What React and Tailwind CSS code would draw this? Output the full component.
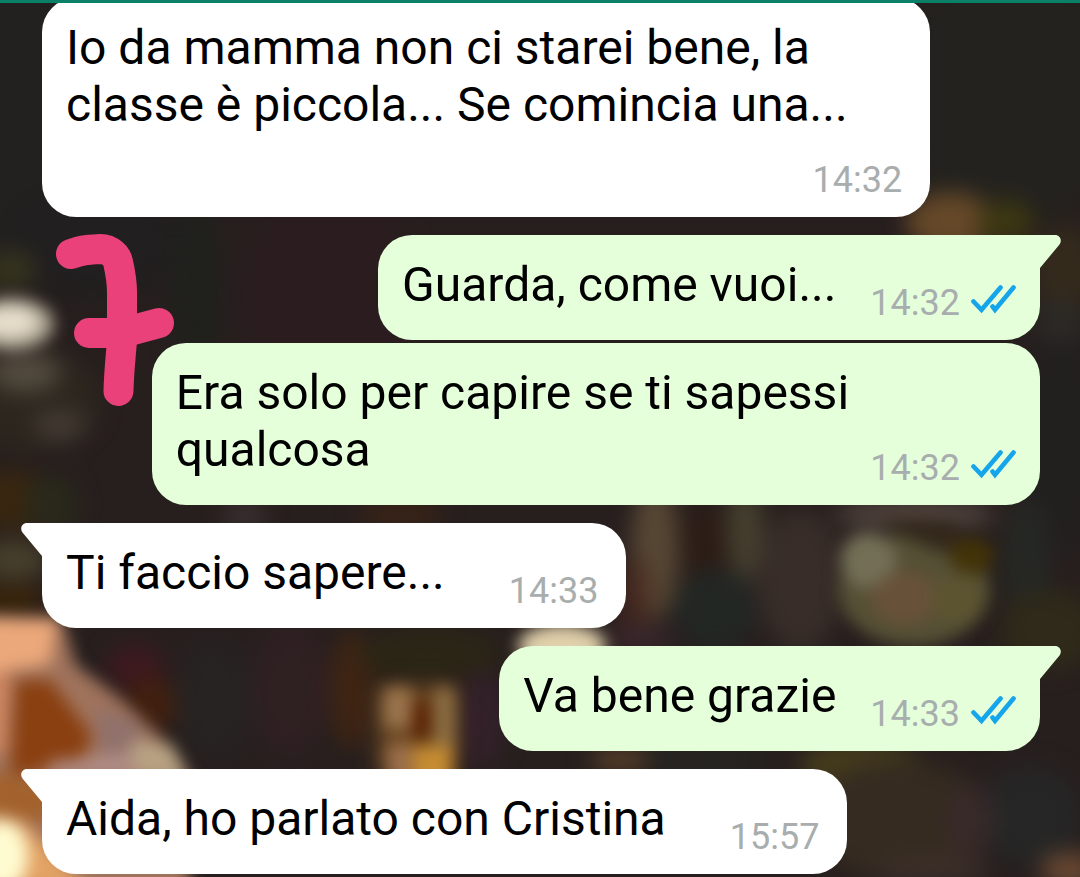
import React from "react";

const MESSAGES = [
  {
    id: 1,
    text: "Io da mamma non ci starei bene, la classe è piccola... Se comincia una...",
    time: "14:32",
  },
  { id: 2, text: "Guarda, come vuoi...", time: "14:32", mine: true, first: true },
  { id: 3, text: "Era solo per capire se ti sapessi qualcosa", time: "14:32", mine: true },
  { id: 4, text: "Ti faccio sapere...", time: "14:33", first: true },
  { id: 5, text: "Va bene grazie", time: "14:33", mine: true, first: true },
  { id: 6, text: "Aida, ho parlato con Cristina", time: "15:57", first: true },
];

// soft shapes of the out-of-focus wallpaper: [cx, cy, rx, ry, fill, opacity]
const BLOBS = [
  [20, 120, 60, 160, "#22211f", 1],
  [90, 240, 90, 60, "#211f1f", 1],
  [330, 300, 90, 120, "#2b1d1f", 1],
  [195, 290, 26, 90, "#20211d", 1],
  [1010, 90, 110, 140, "#23221e", 1],
  [1060, 440, 50, 110, "#22201f", 1],
  [950, 222, 44, 30, "#654828", 1],
  [1006, 222, 28, 22, "#3c3712", 1],
  [1066, 270, 34, 44, "#342a1c", 1],
  [1060, 320, 24, 24, "#2c2a26", 1],
  [10, 270, 26, 20, "#35331e", 1],
  [30, 400, 70, 50, "#2c261e", 1],
  [25, 372, 36, 20, "#524b3f", 1],
  [60, 425, 26, 14, "#453d34", 1],
  [12, 500, 34, 30, "#39270f", 1],
  [52, 505, 26, 30, "#29291b", 1],
  [14, 560, 34, 20, "#48402c", 1],
  [12, 600, 34, 14, "#3a2508", 1],
  [245, 515, 22, 14, "#3b3031", 1],
  [400, 515, 44, 12, "#3c2415", 1],
  [135, 668, 30, 24, "#3f1820", 0.9],
  [150, 705, 26, 28, "#45200d", 0.9],
  [215, 700, 40, 60, "#272322", 1],
  [290, 690, 40, 70, "#2f2022", 1],
  [352, 690, 22, 60, "#3f2513", 1],
  [430, 655, 70, 26, "#2b2615", 1],
  [480, 720, 24, 50, "#33212a", 1],
  [655, 550, 24, 70, "#574734", 1],
  [635, 600, 18, 44, "#4a2a20", 0.7],
  [705, 545, 24, 40, "#2c1d16", 1],
  [745, 530, 18, 50, "#45402f", 1],
  [715, 610, 40, 40, "#222724", 1],
  [800, 580, 44, 70, "#382d29", 1],
  [915, 515, 80, 16, "#51443e", 1],
  [1025, 560, 24, 60, "#262824", 1],
  [1050, 630, 50, 40, "#2f2a19", 1],
  [640, 640, 34, 14, "#38262c", 1],
  [700, 760, 60, 14, "#252622", 1],
  [860, 765, 60, 26, "#453c1c", 1],
  [900, 820, 90, 60, "#352b20", 1],
  [1030, 815, 50, 50, "#262626", 1],
  [970, 820, 26, 36, "#3a2a2c", 0.8],
  [930, 870, 60, 16, "#3b2e28", 1],
  [1070, 870, 30, 18, "#684731", 1],
  [620, 760, 30, 12, "#58402a", 1],
];

function Wallpaper() {
  return (
    <svg
      className="absolute inset-0 h-full w-full bg-[#271f1e]"
      viewBox="0 0 1080 877"
      preserveAspectRatio="xMidYMid slice"
      aria-hidden="true"
    >
      <defs>
        <filter
          id="soft"
          x="-100"
          y="-100"
          width="1280"
          height="1080"
          filterUnits="userSpaceOnUse"
          colorInterpolationFilters="sRGB"
        >
          <feGaussianBlur stdDeviation="11" />
        </filter>
        <filter
          id="crisp"
          x="-100"
          y="-100"
          width="1280"
          height="1080"
          filterUnits="userSpaceOnUse"
          colorInterpolationFilters="sRGB"
        >
          <feGaussianBlur stdDeviation="8" />
        </filter>
      </defs>
      <g filter="url(#soft)">
        {BLOBS.map(([cx, cy, rx, ry, fill, opacity], i) => (
          <ellipse key={i} cx={cx} cy={cy} rx={rx} ry={ry} fill={fill} opacity={opacity} />
        ))}
      </g>

      {/* light on the left edge */}
      <g filter="url(#crisp)">
        <ellipse cx="12" cy="324" rx="42" ry="26" fill="#aca391" />
        <ellipse cx="10" cy="322" rx="28" ry="16" fill="#e6decb" />
      </g>

      {/* warm figure, bottom left */}
      <g filter="url(#crisp)">
        <path d="M-20 616 L62 618 L76 665 L120 698 L160 736 L188 772 L190 900 L-20 900 Z" fill="#a0735c" />
        <path d="M-20 616 L58 618 L50 664 L-20 676 Z" fill="#eba87a" />
        <path d="M16 680 L50 680 L92 735 L80 766 L10 776 Z" fill="#8a4011" />
        <path d="M-20 670 L10 676 L6 750 L-20 760 Z" fill="#cf8660" />
        <path d="M96 706 L140 724 L150 760 L100 756 Z" fill="#90716b" />
        <path d="M50 762 L130 752 L135 775 L45 775 Z" fill="#b08d86" />
        <path d="M130 740 L172 744 L190 780 L135 775 Z" fill="#b8a283" />
        <path d="M-20 770 L50 785 L50 824 L-20 810 Z" fill="#a3622c" />
        <path d="M-20 812 L24 822 L60 860 L90 890 L-20 890 Z" fill="#e3a364" />
        <ellipse cx="2" cy="856" rx="26" ry="36" fill="#fffbd0" />
      </g>

      {/* gold objects in the middle */}
      <g filter="url(#soft)">
        <rect x="378" y="686" width="78" height="90" fill="#6b4722" />
      </g>
      <g filter="url(#crisp)">
        <rect x="384" y="688" width="28" height="40" fill="#9a754d" />
        <rect x="434" y="688" width="20" height="60" fill="#8d7044" />
        <rect x="412" y="702" width="18" height="36" fill="#581f00" />
        <rect x="388" y="744" width="22" height="40" fill="#9d714e" />
        <rect x="412" y="746" width="40" height="44" fill="#c68c32" />
        <ellipse cx="562" cy="646" rx="44" ry="22" fill="#e0d0ab" />
      </g>

      {/* round shape on the right */}
      <g filter="url(#crisp)">
        <ellipse cx="914" cy="590" rx="76" ry="56" fill="#555035" />
        <ellipse cx="868" cy="560" rx="28" ry="28" fill="#736f56" />
        <path d="M880 520 L950 522 L990 560 L940 552 L900 535 Z" fill="#33281b" />
        <ellipse cx="905" cy="598" rx="34" ry="26" fill="#685139" />
        <ellipse cx="958" cy="600" rx="28" ry="24" fill="#5c5431" />
        <ellipse cx="972" cy="556" rx="22" ry="18" fill="#423308" />
      </g>
    </svg>
  );
}

function Ticks() {
  return (
    <svg
      className="h-9 w-[45px] shrink-0"
      viewBox="0 0 45 36"
      fill="none"
      stroke="#14a5ea"
      strokeWidth="4.6"
      strokeLinecap="round"
      role="img"
      aria-label="Letto"
    >
      <path d="M2.500 16.500 L10.500 24.800 L29.500 2.500" />
      <path d="M21.500 21.500 L24 24.800 L42.500 2.500" />
    </svg>
  );
}

function Tail({ mine }) {
  return (
    <svg
      className={`absolute top-0 h-[34px] w-[22px] ${
        mine ? "left-full -ml-px fill-[#e5ffdb]" : "right-full -mr-px -scale-x-100 fill-white"
      }`}
      viewBox="0 0 22 34"
      aria-hidden="true"
    >
      <path d="M0 0 H16 C21 0 23.5 5.5 20.5 9.5 L1 33 V34 H0 Z" />
    </svg>
  );
}

function Bubble({ message }) {
  const { text, time, mine, first } = message;
  const corner = first ? (mine ? "rounded-tr-none" : "rounded-tl-none") : "";

  return (
    <li
      className={`relative flow-root w-fit max-w-[89%] rounded-[34px] pt-[21px] pb-4 pl-6 ${corner} ${
        mine ? "self-end bg-[#e5ffdb] pr-6" : "self-start bg-white pr-7"
      } ${first ? "mt-[18px]" : "mt-[3px]"}`}
    >
      {first && <Tail mine={mine} />}
      <span className="text-[48px] leading-[57px] text-black">{text}</span>
      <span
        className={`float-right mt-[26px] flex items-center gap-[11px] text-[36px] leading-[42px] text-[#a8adae] ${
          mine ? "ml-[34px]" : "ml-16"
        }`}
      >
        <time>{time}</time>
        {mine && <Ticks />}
      </span>
    </li>
  );
}

function Scribble() {
  return (
    <svg
      className="absolute top-[230px] left-[50px] h-[180px] w-[130px]"
      viewBox="50 230 130 180"
      fill="none"
      stroke="#ea417a"
      strokeWidth="30"
      strokeLinecap="round"
      strokeLinejoin="round"
      role="img"
      aria-label="7"
    >
      <path d="M71 254 C80 251 82 250 100 249 C111 249 117 257 118 262 Q122 280 122 292 V340 C121 355 119 370 118.500 391" />
      <path d="M89 333 H122 L159 323" />
    </svg>
  );
}

export default function App() {
  return (
    <div className="relative min-h-screen overflow-hidden font-[Roboto,sans-serif]">
      <Wallpaper />
      <main className="relative pr-10 pb-[3px] pl-[42px]">
        <ul className="-mt-[5px] flex flex-col">
          {MESSAGES.map((message) => (
            <Bubble key={message.id} message={message} />
          ))}
        </ul>
      </main>
      <Scribble />
      <header className="absolute inset-x-0 top-0 h-[3px] bg-[#0a8069]" />
    </div>
  );
}
